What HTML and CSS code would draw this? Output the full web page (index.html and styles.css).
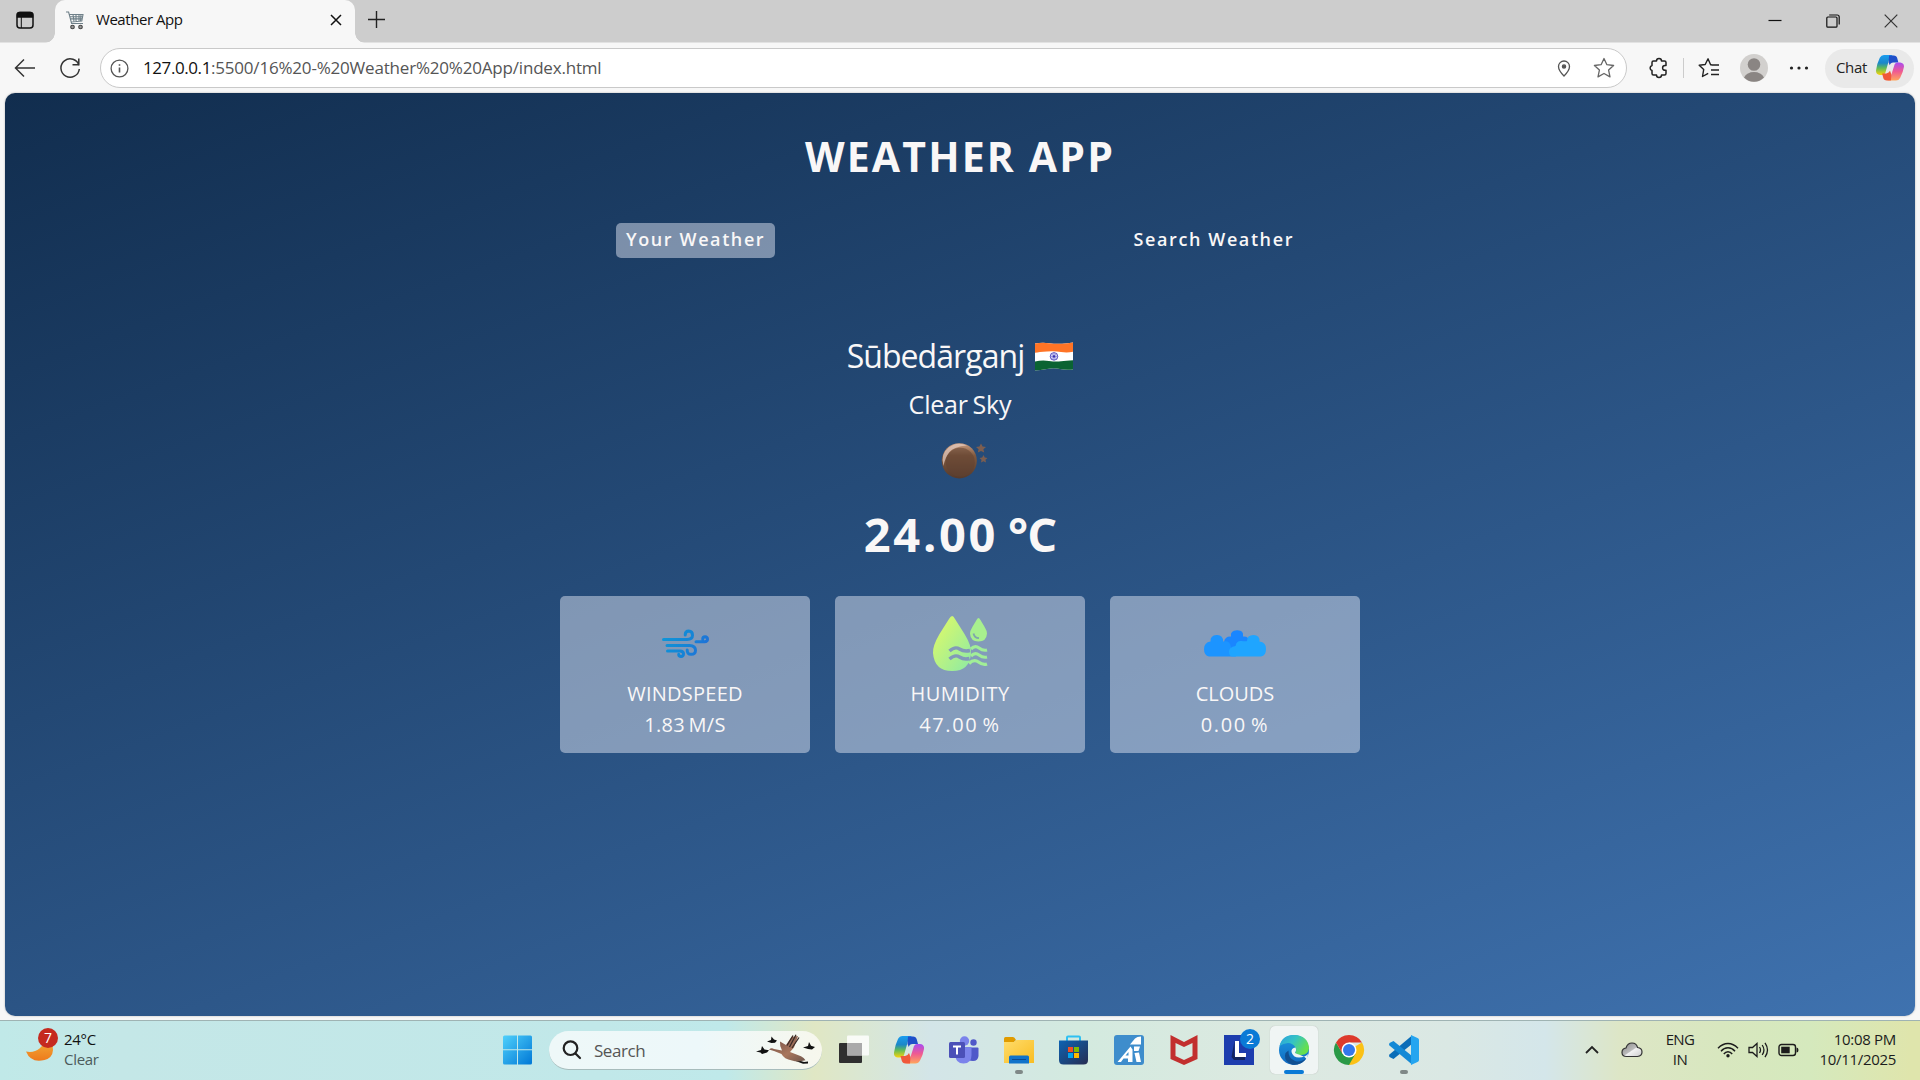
FILE: index.html
```html
<!DOCTYPE html>
<html lang="en">
<head>
<meta charset="utf-8">
<title>Weather App</title>
<link rel="stylesheet" href="styles.css">
</head>
<body>
<svg width="0" height="0" class="defs" aria-hidden="true">
  <defs>
    <linearGradient id="cpA" x1="0" y1="0" x2="0" y2="1"><stop offset="0" stop-color="#1a9df0"/><stop offset=".4" stop-color="#1b87c9"/><stop offset=".65" stop-color="#5fba59"/><stop offset="1" stop-color="#fbd40a"/></linearGradient>
    <linearGradient id="cpB" x1="0" y1="0" x2="0" y2="1"><stop offset="0" stop-color="#a94bf2"/><stop offset=".5" stop-color="#ef5a92"/><stop offset="1" stop-color="#ffa65c"/></linearGradient>
    <linearGradient id="win" x1="0" y1="0" x2="1" y2="1"><stop offset="0" stop-color="#4fd0fb"/><stop offset="1" stop-color="#0078d6"/></linearGradient>
    <linearGradient id="hum" x1="0" y1="0" x2="1" y2="1"><stop offset="0" stop-color="#e4fb63"/><stop offset="1" stop-color="#8ceaa5"/></linearGradient>
    <linearGradient id="wind" gradientUnits="userSpaceOnUse" x1="8" y1="18" x2="55" y2="45"><stop offset="0" stop-color="#0d98d8"/><stop offset=".55" stop-color="#1584d6"/><stop offset="1" stop-color="#2469d8"/></linearGradient>
    <linearGradient id="moon" x1="0" y1="0" x2="0" y2="1"><stop offset="0" stop-color="#c99c80"/><stop offset=".35" stop-color="#80593f"/><stop offset="1" stop-color="#553a2c"/></linearGradient>
    <linearGradient id="cres" x1="0" y1="0" x2="0" y2="1"><stop offset="0" stop-color="#f3b33b"/><stop offset="1" stop-color="#ee7a1c"/></linearGradient>
    <linearGradient id="fold" x1="0" y1="0" x2="1" y2="1"><stop offset="0" stop-color="#ffdc6b"/><stop offset="1" stop-color="#f9bd22"/></linearGradient>
    <linearGradient id="store" x1="0" y1="0" x2="1" y2="1"><stop offset="0" stop-color="#0d63b3"/><stop offset="1" stop-color="#272d52"/></linearGradient>
    <linearGradient id="edgeA" x1="0" y1="0" x2="1" y2=".5"><stop offset="0" stop-color="#2a9fe0"/><stop offset=".5" stop-color="#35c3c4"/><stop offset="1" stop-color="#67e04c"/></linearGradient>
    <linearGradient id="edgeB" x1="0" y1="0" x2="0" y2="1"><stop offset="0" stop-color="#1d9be2"/><stop offset="1" stop-color="#1068c0"/></linearGradient>
    <linearGradient id="goose" x1="0" y1="0" x2="1" y2="1"><stop offset="0" stop-color="#6a4a42"/><stop offset=".6" stop-color="#a9765d"/><stop offset="1" stop-color="#6e564c"/></linearGradient>
    <linearGradient id="cloudG" x1="0" y1="0" x2="1" y2="1"><stop offset="0" stop-color="#888"/><stop offset=".5" stop-color="#bbb"/><stop offset=".55" stop-color="#f2f2f2"/><stop offset="1" stop-color="#ccc"/></linearGradient>
    <symbol id="copilot" viewBox="0 0 30 28">
      <path fill="url(#cpA)" d="M8.500 0H18q-3 1.500-4 5l-4 14q-1 3-3.500 2.500H4q-4.500-.5-4-5Q1 9 4 3 5.500 0 8.500 0Z"/>
      <path fill="#1f4fc9" d="M14 .5h5q3 0 3.800 3L24 8h-5.500q-3 0-3.700 3L13.500 8Z"/>
      <path fill="url(#cpB)" d="M21.500 27.500H12q3-1.500 4-5l4-12.500Q21 8 23 8h3q4.500.5 4 5-1 6-4 11.500-1.500 3-4.500 3Z"/>
      <path fill="#f0583a" d="M16 27.500h-4.500q-3 0-3.800-3L6.500 20H11q3-.5 4-3l1.500 4Z"/>
    </symbol>
  </defs>
</svg>

<header class="tabstrip">
  <div class="tab-actions"><svg width="20" height="20" viewBox="0 0 20 20" fill="none" stroke="#111" stroke-width="1.500"><rect x="2" y="2.500" width="16" height="15.500" rx="3"/><path d="M2.500 3.500Q3 2.500 5 2.500h10q2 0 2.500 1V7h-15Z" fill="#111"/><path d="M6.300 6v12" stroke-width="1"/></svg></div>
  <div class="tab">
    <svg class="cart" width="20" height="20" viewBox="0 0 20 20" fill="none" stroke="#6f8089" stroke-width="1.100"><path d="M1 2h2.600l3 11.500H18M4.500 4.500H18l-1.200 6.500L6 12M4.800 6.700h13M5.500 8.900h11.800M8 4.500l1 7M11 4.500v7M14 4.500v7M16 4.500l-.5 7"/><circle cx="7.500" cy="17" r="1.800" fill="#999" stroke="#444"/><circle cx="15.500" cy="17" r="1.800" fill="#999" stroke="#444"/></svg>
    <span class="tab-title">Weather App</span>
    <svg class="tab-close" width="12" height="12" viewBox="0 0 12 12" stroke="#111" stroke-width="1.500"><path d="M1 1l10 10M11 1L1 11"/></svg>
  </div>
  <svg class="new-tab" width="19" height="19" viewBox="0 0 19 19" stroke="#222" stroke-width="1.400"><path d="M9.500 1v17M1 9.500h17"/></svg>
  <div class="win-controls">
    <svg width="14" height="14" viewBox="0 0 14 14" fill="none" stroke="#111" stroke-width="1.200"><path d="M.5 6.500h13"/></svg>
    <svg width="14" height="14" viewBox="0 0 14 14" fill="none" stroke="#111" stroke-width="1.200"><rect x=".8" y="3" width="10.200" height="10.200" rx="1"/><path d="M3.200 1h8q2 0 2 2v7.500"/></svg>
    <svg width="14" height="14" viewBox="0 0 14 14" fill="none" stroke="#333" stroke-width="1.200"><path d="M.7.7l12.600 12.600M13.300.7L.7 13.300"/></svg>
  </div>
</header>

<nav class="toolbar">
  <svg class="back" width="22" height="20" viewBox="0 0 22 20" fill="none" stroke="#333" stroke-width="1.500"><path d="M21 10H1.500M10 1.500L1.500 10l8.500 8.500"/></svg>
  <svg class="reload" width="22" height="22" viewBox="0 0 22 22" fill="none" stroke="#333" stroke-width="1.500"><path d="M20 8.500A9.200 9.200 0 1 0 20.300 12M19.800 1.500v6.300h-6.300"/></svg>
  <div class="address">
    <svg width="19" height="19" viewBox="0 0 19 19" fill="none" stroke="#555" stroke-width="1.300"><circle cx="9.500" cy="9.500" r="8.400"/><path d="M9.500 8.500v5M9.500 5.200v1.600" stroke-width="1.600"/></svg>
    <span class="url"><b>127.0.0.1</b>:5500/16%20-%20Weather%20%20App/index.html</span>
    <svg class="pin" width="14" height="17" viewBox="0 0 14 17" fill="none" stroke="#555" stroke-width="1.300"><path d="M7 16Q1.500 10.500 1.500 6.500a5.500 5.500 0 0 1 11 0Q12.500 10.500 7 16Z"/><circle cx="7" cy="6.500" r="1.600" fill="#555"/></svg>
    <svg width="22" height="22" viewBox="0 0 22 22" fill="none" stroke="#666" stroke-width="1.300" stroke-linejoin="round"><path d="M11 1.500l2.900 6.200 6.700.8-5 4.600 1.400 6.800-6-3.400-6 3.400 1.400-6.800-5-4.600 6.700-.8Z"/></svg>
  </div>
  <svg class="ext" width="24" height="24" viewBox="0 0 24 24" fill="none" stroke="#222" stroke-width="1.500" stroke-linejoin="round"><path d="M6.500 5h3a2.500 2.500 0 0 1 5 0h3q1.500 0 1.500 1.500V9.500h-1a2.400 2.400 0 0 0 0 4.800h1v3.200q0 1.500-1.500 1.500h-3a2.500 2.500 0 0 1-5 0h-3Q5 19 5 17.500v-3a2.600 2.600 0 0 1 0-5v-3Q5 5 6.500 5Z"/></svg>
  <i class="divider"></i>
  <svg class="favs" width="24" height="24" viewBox="0 0 24 24" fill="none" stroke="#222" stroke-width="1.400" stroke-linejoin="round"><path d="M14.500 9L13.500 8.500 11 2.800l-2.800 5.700-6 .8 4.500 4.300L5.500 20.500l5.700-3.200M14.500 9h7.500M14 14h8M14 18.500h8"/></svg>
  <svg class="avatar" width="28" height="28" viewBox="0 0 28 28"><circle cx="14" cy="14" r="14" fill="#d2d0ce"/><circle cx="14" cy="10.500" r="6.300" fill="#8a8583"/><path d="M4 23.500q3-5.500 10-5.500t10 5.500A14 14 0 0 1 4 23.500Z" fill="#8a8583"/></svg>
  <svg class="more" width="24" height="24" viewBox="0 0 24 24" fill="#222"><circle cx="4.500" cy="12" r="1.600"/><circle cx="12" cy="12" r="1.600"/><circle cx="19.500" cy="12" r="1.600"/></svg>
  <div class="chat"><span>Chat</span><svg width="28" height="26"><use href="#copilot"/></svg></div>
</nav>

<main class="page">
  <h1>WEATHER APP</h1>
  <div class="tabs"><button class="active">Your Weather</button><button>Search Weather</button></div>
  <div class="city"><span>Sūbedārganj</span>
    <svg width="38" height="29" viewBox="0 0 38 29"><defs><clipPath id="flag"><path d="M0 1.500Q7 .3 14 1.200T27 1.700 38 .4V27.500Q31 28.300 25 27T12 27 0 28.600Z"/></clipPath></defs><g clip-path="url(#flag)"><rect width="38" height="29" fill="#fff"/><path d="M0 0H38V9.800Q32 11 26 10T12 9.500 0 10.800Z" fill="#ff7426"/><path d="M0 19.500Q7 18 14 19t12 .3 12-1V29H0Z" fill="#0a6332"/></g><circle cx="19" cy="14.400" r="3.800" fill="#d9d8f6" stroke="#4038b8" stroke-width=".8"/><path d="M15.200 14.400h7.600M19 10.600v7.600M16.300 11.700l5.400 5.400M21.700 11.700l-5.400 5.400" stroke="#5650c4" stroke-width=".5"/><circle cx="19" cy="14.400" r="1.200" fill="#3a32b0"/></svg>
  </div>
  <p class="desc">Clear Sky</p>
  <svg class="sky" width="62" height="62" viewBox="0 0 62 62"><circle cx="30.300" cy="30.800" r="17.600" fill="url(#moon)"/><path d="M14.500 36Q11 24 19.500 17.500T38 15.500Q25 16.500 20.500 22T14.500 36Z" fill="#e3cabd" opacity=".75"/><circle cx="31.300" cy="32.300" r="14.500" fill="#614232" opacity=".55"/><path fill="#7c5e50" d="M52 13.500l1.600 3.100 3.400.3-2.600 2.300.8 3.300-3.200-1.600-3.200 1.600.8-3.300-2.600-2.300 3.400-.3ZM54.500 25l1.300 2.500 2.700.4-2 1.900.5 2.700-2.500-1.200-2.500 1.200.5-2.700-2-1.900 2.700-.4Z"/></svg>
  <p class="temp">24.00 <span>°C</span></p>
  <section class="cards">
    <article class="card">
      <svg width="62" height="62" viewBox="0 0 62 62" fill="none" stroke="url(#wind)" stroke-width="3" stroke-linecap="round" stroke-linejoin="round"><path d="M9.500 27.500H33q5.500-.3 5.500-4.300T34.700 19q-3.500 0-3.500 4M13 33.500H35.500q6 .3 6 4.700T37 42.300q-4 0-3.800-4.300M13.500 39H26q3.500.2 3.500 2.800T27 44.500q-2.300 0-2.300-2.300M42 29.800h8.500q3-.2 3-2.500T51 24.800q-2.300 0-2.300 2.400"/></svg>
      <p class="ls-w">WINDSPEED</p><p class="speed">1.83 M/S</p>
    </article>
    <article class="card">
      <svg width="62" height="62" viewBox="0 0 62 62"><path fill="url(#hum)" d="M23.200 4Q24.500 4 26 7l9.500 15q7 11.500 6.500 19Q41 59 23.200 59T4 41Q3.500 34 10.500 22L20 7Q21.800 4 23.200 4Z"/><path fill="#a8f08e" d="M49.500 6q1 0 1.800 1.800l4.200 7Q58 19 58 21.500 57.500 29.500 49.500 29.500T41 21.500Q41 19 43.500 14.800l4.200-7Q48.500 6 49.500 6Z"/><path fill="none" stroke="#7fa5ad" stroke-width="1.800" d="M44.500 21.500Q45.500 26 50 26.200"/><path fill="none" stroke="#8299b9" stroke-width="3.400" stroke-linejoin="round" d="M20.500 39q5.500-5 10-2t10.500 1.500M20.500 47q5.500-5 10-2t10 1.500"/><path fill="none" stroke="#a1ee97" stroke-width="3.200" d="M42 37q4-4 8-1t8 2M42 44q4-4 8-1t8 2M40 51.500q5-5 9.500-1.500t8.500 2"/></svg>
      <p class="ls-h">HUMIDITY</p><p class="num">47.00 %</p>
    </article>
    <article class="card">
      <svg width="62" height="62" viewBox="0 0 62 62"><path fill="#1a86ff" d="M20 30q1-6 7-5.500Q26 18.500 33 18.300T39 24.500q6-.5 7 5.500v8H20Z"/><path fill="#1c94ff" d="M5 44.500Q0 43.500 0 37t6.500-7.500Q6 23.500 12.500 23t6.700 6.500Q26 28 27 35l5 9.500Z"/><path fill="#1fa5ff" d="M28 44.500Q25 44 25 39.500T31.500 34q1-5.500 6-5T43 29q0-6 6.500-6t6 6.500Q62 30 62 37t-5 7.500Z"/></svg>
      <p>CLOUDS</p><p class="num">0.00 %</p>
    </article>
  </section>
</main>

<footer class="taskbar">
  <div class="widget">
    <div class="moonbox"><svg width="30" height="30" viewBox="0 0 30 30"><path d="M0 17.500q8 1.500 13.500-3T19.500 3Q27.500 8 27 16t-8.500 10Q5 29.500 0 17.500Z" fill="url(#cres)"/></svg><b class="badge">7</b></div>
    <div class="two"><span>24°C</span><span class="dim">Clear</span></div>
  </div>
  <div class="cell"><svg viewBox="0 0 48 48"><path fill="url(#win)" d="M11.500 9.500H24v13.700H10V11Q10 9.500 11.500 9.500ZM25 9.500h12.500Q39 9.500 39 11v12.200H25ZM10 24.300H24V38.500H11.500Q10 38.500 10 37ZM25 24.300H39V37q0 1.500-1.500 1.500H25Z"/></svg></div>
  <div class="search">
    <svg width="20" height="20" viewBox="0 0 20 20" fill="none" stroke="#222" stroke-width="2.200" stroke-linecap="round"><circle cx="8.500" cy="8.200" r="6.800"/><path d="M13.500 13.500l4.500 4.500"/></svg>
    <span>Search</span>
    <svg class="geese" width="60" height="32" viewBox="0 0 60 32"><path fill="#111" d="M0 17.500l5-1.500L6 12l2.500 3.500 4.500.8-2 2.200-5 1.500-1.500-1.500ZM11 7.500l4-1.500L15.500 2.500 18 5.500l3 1-2 2.300-3.500.2ZM47 13.500l5-1.500L53 8l2 3.800 4 1.200-3 2.500-4-.5ZM40 25.500l8 2.500 4-.5v2l-5 .3-8-3Z"/><path fill="url(#goose)" d="M13 15.500Q15.500 13.500 18 15l8 1.500Q23.500 12 24 7.500L30 11 35.500 3 42 2 38 13.500 34 18l11 4.300q3 1.500 4.500 4Q42 28.500 36 26.500 28 25 25.500 20L18 17Z"/><path d="M31 11.500L37 1.500M33.500 13L40 .8M36 14L43 3.500" stroke="#3b2a26" stroke-width="1.300"/></svg>
  </div>
  <div class="cell view"><svg viewBox="0 0 48 48"><rect x="9" y="17" width="23" height="20" rx="1" fill="#2f2f2f"/><rect x="17" y="9.500" width="22" height="20" rx="1" fill="#fff" opacity=".82"/><rect x="17" y="17" width="15" height="12.500" fill="#aaa"/></svg></div>
  <div class="cell"><svg viewBox="0 0 48 48"><use href="#copilot" x="9" y="10" width="30" height="28"/></svg></div>
  <div class="cell"><svg viewBox="0 0 48 48"><circle cx="24.500" cy="15" r="4.700" fill="#7b83eb"/><circle cx="33.500" cy="16.500" r="3.200" fill="#5059c9"/><path d="M29 21.500h8.500q1 0 1 1V30q-.5 5-5.500 5-3 0-4-1Z" fill="#5059c9"/><path d="M15.500 21h16v8q0 8.500-8 8.500t-8-8.500Z" fill="#7b83eb"/><rect x="9" y="16" width="16" height="16" rx="1.500" fill="#4b50b8"/><path d="M13 20.500h8M17 20.500v8" stroke="#fff" stroke-width="2"/></svg></div>
  <div class="cell open"><svg viewBox="0 0 48 48"><path d="M9 12.500Q9 11 10.500 11H18q1.500 0 3 3l-2 2H9Z" fill="#e09b00"/><path d="M9 16h10l2.500-2H39v23H9Z" fill="url(#fold)"/><path d="M14 37.500V31q0-1.500 1.500-1.500h17Q34 29.500 34 31v6.500Z" fill="#1173ca"/><path d="M17 33.500h14" stroke="#0b4a92"/></svg></div>
  <div class="cell"><svg viewBox="0 0 48 48"><path d="M17 16v-4.500q0-1 1-1h11q1 0 1 1V16" fill="none" stroke="#2fc0f2" stroke-width="2"/><path d="M9 14.500H38V34q0 4.500-4.500 4.500h-20Q9 38.500 9 34Z" fill="url(#store)"/><path d="M18 21h5v5h-5Z" fill="#f25022"/><path d="M24 21h5v5h-5Z" fill="#7fba00"/><path d="M18 27h5v5h-5Z" fill="#00a4ef"/><path d="M24 27h5v5h-5Z" fill="#ffb900"/></svg></div>
  <div class="cell"><svg viewBox="0 0 48 48"><rect x="9" y="9" width="30" height="30" rx="3" fill="#3e8dcc"/><path fill="#fff" d="M12.500 36L25.500 20.500l2 3V36H23v-3.500h-4.500L16 36ZM25 18.500L30 12.500Q32 10.500 36 10.500V18.500ZM29 20.500h6l-1.500 4.500H29ZM29.500 27l4.500-.5L36 36h-4.500Z"/><path d="M20.500 29.500h3V26Z" fill="#3e8dcc"/></svg></div>
  <div class="cell"><svg viewBox="0 0 48 48"><path fill="#c22f2e" fill-rule="evenodd" d="M10.500 9L24 16l13.500-7v24L24 39l-13.500-6ZM15.500 17v13l8.500 4 8.500-4V17L24 21Z"/></svg></div>
  <div class="cell"><svg viewBox="0 0 48 48"><path d="M9 9H39V39H9Z" fill="#1d3dae"/><path d="M19.500 15v15H30V34H19l-2.500-3Z" fill="#12245f"/><path d="M20 15h4v12h7v4H20Z" fill="#fff"/></svg><b class="badge blue">2</b></div>
  <div class="cell current"><svg viewBox="0 0 48 48"><circle cx="24" cy="24" r="15" fill="url(#edgeB)"/><path fill="url(#edgeA)" d="M9.500 20Q12 9 24 9q14 .5 15 13-.5 7-8 7-5 0-6-2.500 2-2 .5-5Q23 17 18 17q-5 .5-8.500 3Z"/><path fill="#104f91" d="M18.500 24.500q-.5 8 6.500 10.500 6 2 12-3.500-5.500 8-14.500 7.300-8-2.800-7.500-9.300.5-3.500 3.500-5Z"/><path fill="#eef5f5" d="M25.500 21.500q-4.500.5-4 4.500Q23 31.500 29 31.500q6-.3 9-3.500L37 33.500Q34 30 29 28.500q-4-.8-4-2.200 1.800-1.500.5-4.800Z"/></svg></div>
  <div class="cell"><svg viewBox="0 0 48 48"><path fill="#fbc116" d="M24 24L37 16.500A15 15 0 0 1 24 39Z"/><path fill="#2a9a47" d="M24 39A15 15 0 0 1 11 16.500L17.500 27.500 30.500 27.800Z"/><path fill="#dd3a2c" d="M11 16.500A15 15 0 0 1 37 16.500H24L17.500 27.700Z"/><circle cx="24" cy="24" r="7.500" fill="#fff"/><circle cx="24" cy="24" r="6" fill="#3477ec"/></svg></div>
  <div class="cell open"><svg viewBox="0 0 48 48"><path d="M32 9.500V18L13.500 33 9.500 31q-1-1.500 0-2.500Z" fill="#0a6db8"/><path d="M32 38.500V30L13.500 15 9.500 17q-1 1.500 0 2.500Z" fill="#1389d6"/><path d="M31 9l7 3.200Q39 13 39 14V34q0 1-1 1.800L31 39Z" fill="#25a5f0"/></svg></div>
  <div class="tray">
    <svg width="14" height="9" viewBox="0 0 14 9" fill="none" stroke="#222" stroke-width="1.800"><path d="M1 8l6-6 6 6"/></svg>
    <svg class="onedrive" width="22" height="16" viewBox="0 0 22 16"><path d="M5.500 14.500Q1 14.500 1 10.500T5 6Q6.500 1 11 1t5.500 4.500Q21 6 21 10t-4.500 4.500Z" fill="url(#cloudG)" stroke="#333" stroke-width="1.200"/></svg>
    <div class="two lang"><span>ENG</span><span>IN</span></div>
    <svg class="wifi" width="22" height="16" viewBox="0 0 22 16" fill="none" stroke="#1c1c1c" stroke-width="1.400"><path d="M1 6.300Q5.500 1.500 11 1.500T21 6.300M4 9.200Q7 5.700 11 5.700t7 3.500M6.800 12Q8.500 9.700 11 9.700T15.200 12"/><circle cx="11" cy="13.800" r="1.700" fill="#1c1c1c" stroke="none"/></svg>
    <svg class="vol" width="21" height="18" viewBox="0 0 21 18" fill="none" stroke="#1c1c1c" stroke-width="1.300"><path d="M1 6.500h3.500L9 2.500v13l-4.500-4H1ZM11.500 6q2 3 0 6M14.200 4q3.500 5 0 10M17 1.800q5 7.200 0 14.400"/></svg>
    <svg class="bat" width="21" height="14" viewBox="0 0 21 14"><rect x="1" y="1.500" width="16.500" height="11" rx="2.500" fill="none" stroke="#1c1c1c" stroke-width="1.400"/><rect x="3.200" y="3.700" width="8.500" height="6.600" fill="#1c1c1c"/><path d="M18.500 4.500q2 0 2 2.500t-2 2.500Z" fill="#1c1c1c"/></svg>
    <div class="two clock"><span>10:08 PM</span><span>10/11/2025</span></div>
  </div>
</footer>
</body>
</html>
```
FILE: styles.css
```css
* { box-sizing: border-box; margin: 0; padding: 0; }
body { width: 1920px; height: 1080px; overflow: hidden; display: flex; flex-direction: column; background: #f7f7f7; font-family: "Open Sans", "Noto Sans", sans-serif; color: #111; }
svg { flex: none; display: block; }
.defs { position: absolute; }

.tabstrip { height: 43px; flex: none; display: flex; align-items: flex-start; background: #cdcdcd; border-bottom: 1px solid #e2e2e2; }
.tab-actions { width: 55px; padding: 10px 0 0 15px; }
.tab { position: relative; width: 300px; height: 43px; display: flex; align-items: flex-start; background: #f7f7f7; border-radius: 10px 10px 0 0; padding: 0 13px 0 10px; }
.tab::before, .tab::after { content: ""; position: absolute; bottom: 0; width: 10px; height: 10px; }
.tab::before { left: -10px; background: radial-gradient(circle at 0 0, transparent 9.5px, #f7f7f7 10px); }
.tab::after { right: -10px; background: radial-gradient(circle at 100% 0, transparent 9.5px, #f7f7f7 10px); }
.cart { margin-top: 10px; }
.tab-title { margin-left: 11px; font-size: 15px; line-height: 20px; padding-top: 9px; letter-spacing: -0.45px; flex: 1; }
.tab-close { margin-top: 14px; }
.new-tab { margin: 10px 0 0 12px; }
.win-controls { margin-left: auto; display: flex; gap: 44px; padding: 14px 22px 0 0; }

.toolbar { height: 50px; flex: none; display: flex; align-items: center; padding-left: 14px; }
.reload { margin-left: 23px; }
.address { width: 1527px; height: 40px; margin-left: 19px; display: flex; align-items: center; background: #fff; border: 1px solid #c9c9c9; border-radius: 20px; padding: 0 11px 0 9px; }
.url { flex: 1; margin-left: 14px; padding-bottom: 2px; font-size: 17px; letter-spacing: -0.19px; color: #555; white-space: nowrap; }
.url b { font-weight: 400; letter-spacing: -0.42px; color: #111; }
.pin { margin-right: 22px; }
.ext { margin-left: 20px; }
.divider { width: 1px; height: 20px; margin-left: 12px; background: #ccc; }
.favs { margin-left: 13px; }
.avatar { margin-left: 19px; }
.more { margin-left: 19px; }
.chat { width: 89px; height: 39px; margin-left: 14px; display: flex; align-items: center; justify-content: space-between; padding: 0 10px 0 11px; border-radius: 20px; background: #e9e9e9; font-size: 15px; letter-spacing: -0.35px; color: #222; }
.chat span { padding-bottom: 2px; }

.page { width: 1910px; height: 923px; flex: none; margin: 0 5px; padding-top: 35px; display: flex; flex-direction: column; align-items: center; border-radius: 10px; background: linear-gradient(160deg, #112d4e 0%, #3f72af 100%); color: #f9f7f7; box-shadow: 0 0 2px #aaa; }
h1 { font-size: 41px; line-height: 56px; letter-spacing: 2.15px; font-weight: 700; }
.tabs { width: 688px; margin-top: 39px; display: flex; justify-content: space-between; }
.tabs button { height: 35px; padding: 0 10px 3px 10px; border: 0; border-radius: 5px; background: none; color: inherit; font: 600 18px "Open Sans", sans-serif; letter-spacing: 1.6px; }
.tabs .active { background: rgba(219, 226, 239, .5); }
.city { margin-top: 76px; display: flex; gap: 11px; align-items: center; height: 44px; font-size: 32px; line-height: 44px; letter-spacing: -0.95px; }
.desc { margin-top: 10px; font-size: 25px; line-height: 32px; letter-spacing: -0.2px; word-spacing: -1.5px; }
.sky { margin-top: 10px; }
.temp { margin-top: 12px; font-size: 47px; font-weight: 700; line-height: 60px; letter-spacing: 2.7px; word-spacing: -5px; }
.temp span { letter-spacing: -1px; }
.cards { margin-top: 32px; display: flex; gap: 25px; }
.card { width: 250px; height: 157px; padding-top: 16px; display: flex; flex-direction: column; align-items: center; border-radius: 5px; background: rgba(219, 226, 239, .5); font-size: 20px; line-height: 31px; }
.card svg { margin-bottom: 4px; }
.ls-w { letter-spacing: .25px; }
.ls-h { letter-spacing: .5px; }
.speed { letter-spacing: .3px; word-spacing: -2px; }
.num { letter-spacing: 1.6px; word-spacing: -2.5px; }

.taskbar { height: 60px; margin-top: auto; flex: none; display: flex; border-top: 1px solid #9fb3b3; padding-top: 5px; font-size: 15px; letter-spacing: -0.3px; background: linear-gradient(90deg, #c0e9e8 0, #c4e7e7 120px, #c1e8e9 600px, #bfe9ea 725px, #e0e7c4 815px, #dae7d2 860px, #d3e5e8 930px, #d3eadf 1080px, #dde9e1 1280px, #dae8e4 1450px, #d4e6ea 1545px, #dde6c6 1620px, #d8e7bf 1720px, #d5e9bd 1810px, #dfe5ac 1910px); }
.widget { width: 493px; height: 46px; display: flex; align-items: center; padding-left: 26px; }
.moonbox { position: relative; width: 38px; }
.badge { position: absolute; left: 12px; top: -6px; width: 20px; height: 20px; border-radius: 50%; background: #c52a1f; color: #fff; font-size: 14px; line-height: 20px; font-weight: 400; text-align: center; letter-spacing: 0; }
.badge.blue { left: 25px; top: 3px; background: #0a7ad6; }
.two { display: flex; flex-direction: column; line-height: 20px; }
.dim { color: #4c5b5b; }
.cell { position: relative; width: 48px; height: 48px; flex: none; margin-right: 7px; border-radius: 5px; }
.cell > svg { width: 48px; height: 48px; }
.view { margin-left: 8px; }
.open::after, .current::after { content: ""; position: absolute; left: 20px; top: 44px; width: 8px; height: 4px; border-radius: 2px; background: #7f8887; }
.current { background: #f0f5f4; box-shadow: 0 0 1px #aaa; }
.current::after { left: 14px; width: 20px; background: #0a7ad6; }
.search { width: 273px; height: 39px; flex: none; margin: 5px 0 0 1px; display: flex; align-items: center; border-radius: 20px; border-bottom: 1px solid #a7bcbc; padding-left: 13px; background: linear-gradient(90deg, #eef8f8, #edf8fa 55%, #f7f7ed); font-size: 17px; letter-spacing: -0.45px; color: #555; }
.search span { flex: 1; margin-left: 12px; }
.geese { margin-right: 6px; }
.tray { height: 46px; margin-left: auto; display: flex; align-items: center; padding-right: 24px; color: #1c1c1c; }
.tray > svg { margin-top: 1px; }
.tray .onedrive { margin-left: 22px; }
.lang { margin-left: 22px; width: 30px; align-items: center; letter-spacing: -0.6px; }
.tray .wifi { margin-left: 22px; }
.tray .vol { margin-left: 9px; }
.tray .bat { margin-left: 9px; }
.clock { width: 78px; margin-left: 19px; align-items: flex-end; }
```
